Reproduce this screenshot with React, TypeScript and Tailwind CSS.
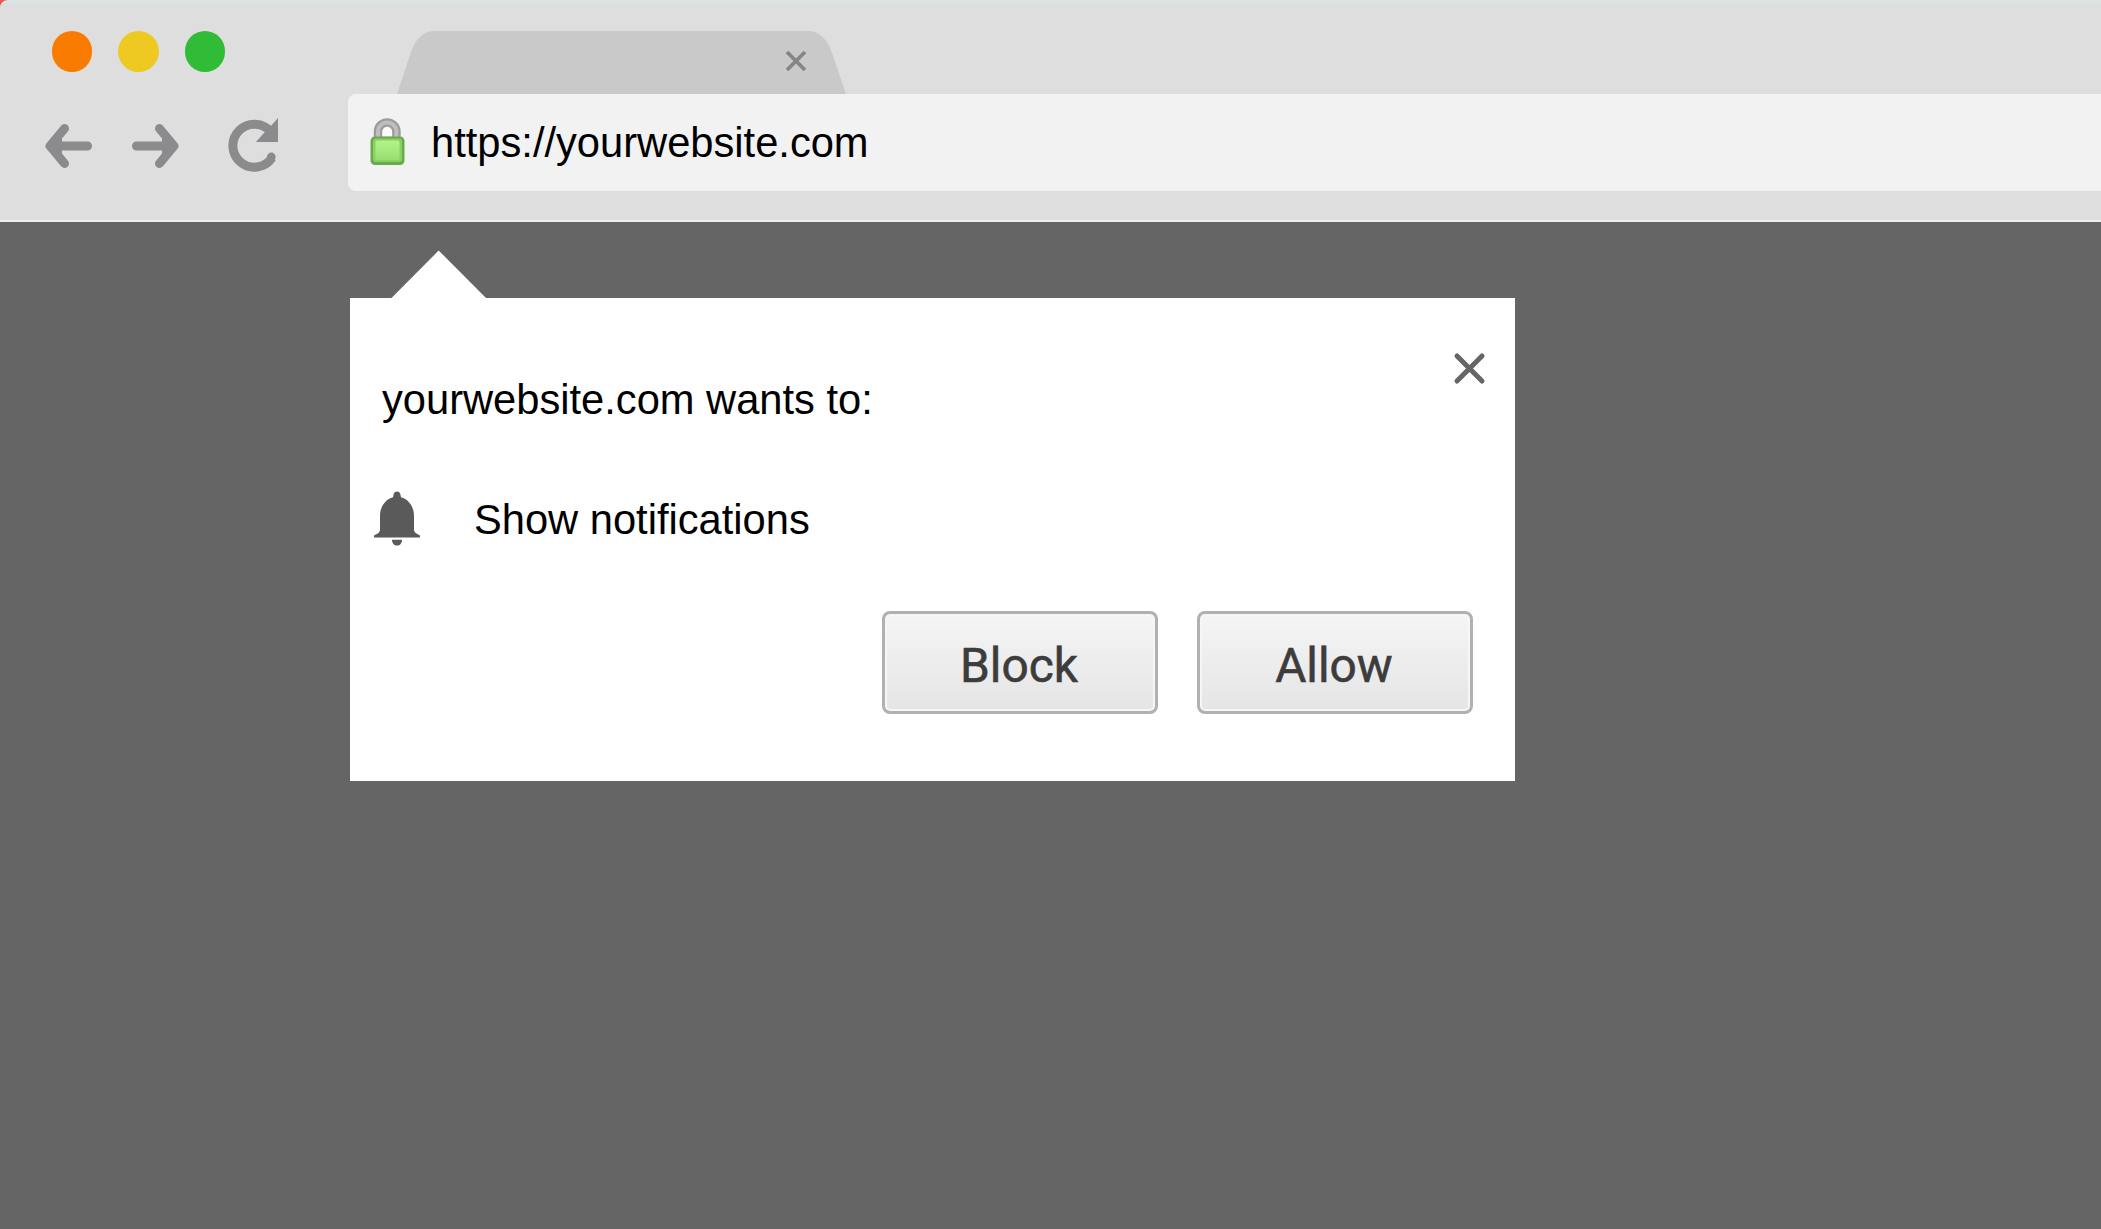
import React from "react";

const Dot = ({ className }: { className: string }) => (
  <span className={`size-[40.500px] rounded-full ${className}`} />
);

const Lock = () => (
  <svg className="ml-[21px] mt-[23px] h-[50px] w-[37px] shrink-0" viewBox="0 0 37 50">
    <defs>
      <linearGradient id="lockBody" x1="0" y1="0" x2="0" y2="1">
        <stop offset="0" stopColor="#b3f28a" />
        <stop offset="0.5" stopColor="#a6e97c" />
        <stop offset="1" stopColor="#9bdc72" />
      </linearGradient>
    </defs>
    <path d="M9 24V14.500a9.200 9 0 0 1 18.400 0V24Z" fill="#fcfcfc" stroke="#9c9c9c" strokeWidth="8.500" />
    <path d="M9 22V14.500a9.200 9 0 0 1 18.400 0V22" fill="none" stroke="#bebebe" strokeWidth="4" />
    <rect x="1.500" y="19.500" width="34" height="28.500" rx="4.500" fill="#69aa4c" />
    <rect x="4" y="21.500" width="29" height="23.500" rx="3" fill="#8ad163" />
    <rect x="6.500" y="23.500" width="24" height="19.500" rx="2" fill="url(#lockBody)" />
  </svg>
);

const Bell = () => (
  <svg className="h-[56px] w-[50px] shrink-0" viewBox="0 0 50 56" fill="#5a5a5a">
    <path d="M25 1.500c2 0 3.500 1.600 3.500 3.600l.5 2.200C37 9.500 42 17 42 26V40.500l1.500 2.500 4.500 2.500v2H2v-2L6.500 43 8 40.500V26C8 17 13 9.500 21 7.300l.5-2.200C21.500 3.100 23 1.500 25 1.500Z" />
    <path d="M20 49.700h10c0 3.500-2 5.800-5 5.800S20 53.200 20 49.700Z" />
  </svg>
);

const DialogButton = ({ children }: { children: React.ReactNode }) => (
  <button className="flex h-[103px] w-[276px] items-center justify-center rounded-[8px] border-[3px] border-[#b1b1b1] bg-linear-to-b from-[#f5f5f5] to-[#e5e5e5] pt-[8px] pr-[2px] font-['Roboto'] text-[47.800px] leading-none text-[#3c3c3c] shadow-[inset_0_0_0_2px_#f6f6f6] [-webkit-text-stroke:0.6px_#3c3c3c]">
    {children}
  </button>
);

export default function App() {
  return (
    <div className="h-[1229px] w-[2101px] overflow-hidden bg-[#656565] font-['Liberation_Sans',sans-serif] text-[41.670px] leading-[48px] text-black">
      <div className="bg-[#e8574f]">
        <header className="h-[222px] rounded-tl-[8px] border-t-[3px] border-b-2 border-t-[#dbe3e3] border-b-[#eeeeee] bg-[#dedede]">
          <div className="flex h-[91px] items-end">
            <div className="flex h-[63px] w-[397px] shrink-0 gap-[26px] pl-[51.700px]">
              <Dot className="bg-[#f97b00]" />
              <Dot className="bg-[#edc921]" />
              <Dot className="bg-[#31bc37]" />
            </div>
            <svg className="h-[63px] w-[450px]" viewBox="0 0 450 63">
              <path d="M0 63 14 21Q21 0 38 0H411Q426 0 434 19L449 63Z" fill="#c9c9c9" />
              <path d="m390 21 18 18m0-18-18 18" stroke="#858585" strokeWidth="3.800" />
            </svg>
          </div>
          <div className="flex h-[97px]">
            <nav className="flex w-[348px] shrink-0 items-center text-[#8b8b8d]">
              <svg className="ml-[44px] mt-[6px] h-[48px] w-[50px]" viewBox="0 0 50 48" fill="none" stroke="currentColor" strokeWidth="9" strokeLinecap="round" strokeLinejoin="round">
                <path d="M43.500 24H7M20.500 6.500 6 24l14.500 17.500" />
                <path d="M7 24 18 13v22Z" fill="currentColor" stroke="none" />
              </svg>
              <svg className="ml-[36px] mt-[6px] h-[48px] w-[50px]" viewBox="0 0 50 48" fill="none" stroke="currentColor" strokeWidth="9" strokeLinecap="round" strokeLinejoin="round">
                <path d="M6.500 24H43M29.500 6.500 44 24 29.500 41.500" />
                <path d="M43 24 32 13v22Z" fill="currentColor" stroke="none" />
              </svg>
              <svg className="ml-[46px] mt-[6px] h-[56px] w-[54px]" viewBox="0 0 54 56" fill="none" stroke="currentColor" strokeWidth="9">
                <path d="M45 14A21.500 21.500 0 1 0 46 40" />
                <circle cx="45.300" cy="39" r="4.400" fill="currentColor" stroke="none" />
                <path d="M52 0V24H30L37 16 43 10Z" fill="currentColor" stroke="none" />
              </svg>
            </nav>
            <div className="flex flex-1 rounded-l-[8px] bg-[#f2f2f2]">
              <Lock />
              <span className="ml-[25px] mt-[25px] whitespace-nowrap">https://yourwebsite.com</span>
            </div>
          </div>
        </header>
      </div>
      <main className="pl-[350px] pt-[28px]">
        <svg className="ml-[41px] h-[48px] w-[96px]" viewBox="0 0 96 48">
          <path d="M0 48.500 47.700.5 95.500 48.500Z" fill="#fff" />
        </svg>
        <section className="h-[483px] w-[1165px] bg-white pl-[22px] pr-[42px]">
          <div className="flex h-[179px] justify-between">
            <p className="ml-[10px] mt-[78px]">yourwebsite.com wants to:</p>
            <svg className="-mr-[14px] mt-[52px] size-[36px]" viewBox="0 0 36 36" stroke="#666" strokeWidth="5" strokeLinecap="round">
              <path d="m6 6 25 25m0-25-25 25" />
            </svg>
          </div>
          <div className="flex h-[134px] pt-[13px]">
            <Bell />
            <p className="ml-[52px] mt-[6px]">Show notifications</p>
          </div>
          <div className="flex justify-end gap-[39px]">
            <DialogButton>Block</DialogButton>
            <DialogButton>Allow</DialogButton>
          </div>
        </section>
      </main>
    </div>
  );
}
